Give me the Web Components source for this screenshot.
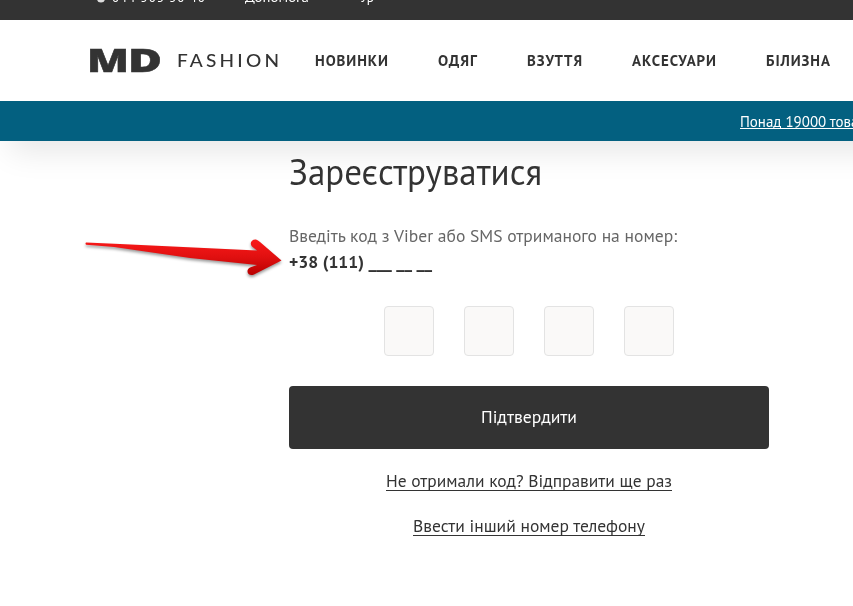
<!DOCTYPE html>
<html lang="uk"><head><meta charset="utf-8"><title>MD Fashion</title>
<style>html,body{margin:0;background:#fff;overflow:hidden}body{font-family:"PT Sans","Noto Sans",sans-serif;color:#333}</style></head>
<body><md-page></md-page>
<script>
// A single line of text condensed to a given width.
class FitText extends HTMLElement{
 connectedCallback(){
  const a=n=>this.getAttribute(n);
  this.attachShadow({mode:'open'}).innerHTML=`<style>:host{display:block;flex:none;width:${a('w')}px;white-space:nowrap}
  span{display:inline-block;transform-origin:0 50%;font-size:${a('size')}px;line-height:${a('lh')||24}px;font-weight:${a('weight')||400};letter-spacing:${a('ls')||0}px}</style><span><slot></slot></span>`;
  const s=this.shadowRoot.querySelector('span');
  s.style.transform=`scaleX(${+a('w')/(s.getBoundingClientRect().width-(+a('ls')||0))})`;
 }}
customElements.define('fit-text',FitText);
class MdTopbar extends HTMLElement{constructor(){super();this.attachShadow({mode:'open'}).innerHTML=`<style>
:host{display:flex;height:20px;background:#333;color:#fff;overflow:hidden;box-sizing:border-box;padding-left:97px;align-items:flex-start}
fit-text{margin-top:-15px}svg{margin:-6px 7px 0 0;flex:none}.h{margin-left:40px}.c{margin-left:51px}</style>
<svg width="8" height="9"><circle cx="4" cy="4.5" r="4" fill="#ddd"/></svg>
<fit-text w="93" size="14" ls="1">044 503 50 40</fit-text><fit-text class="h" w="64" size="14">Допомога</fit-text><fit-text class="c" w="14" size="14">Ур</fit-text>`}}
customElements.define('md-topbar',MdTopbar);
class MdLogo extends HTMLElement{constructor(){super();this.attachShadow({mode:'open'}).innerHTML=`<style>
:host{display:flex;align-items:center;width:190px;height:81px;flex:none}.m{font-family:"Open Sans",sans-serif;margin:-2px 0 0 -2px;-webkit-text-stroke:.5px #333}.d{margin-left:-1px}.f{font-family:Lato,sans-serif;margin:-2px 0 0 15px}</style>
<fit-text class="m" w="42" size="32" weight="800" lh="40">M</fit-text><fit-text class="m d" w="34" size="32" weight="800" lh="40">D</fit-text><fit-text class="f" w="102" size="18" ls="3" weight="500">FASHION</fit-text>`}}
customElements.define('md-logo',MdLogo);
class MdHeader extends HTMLElement{constructor(){super();this.attachShadow({mode:'open'}).innerHTML=`<style>
:host{display:flex;height:81px;align-items:center;padding-left:89px;background:#fff}nav{display:flex;gap:50px;margin:-2px 0 0 36px}</style>
<md-logo></md-logo><nav>${[['НОВИНКИ',73],['ОДЯГ',39],['ВЗУТТЯ',55],['АКСЕСУАРИ',84],['БІЛИЗНА',64]].map(([t,w])=>`<fit-text w="${w}" size="16" weight="700" ls="1">${t}</fit-text>`).join('')}</nav>`}}
customElements.define('md-header',MdHeader);
class MdBanner extends HTMLElement{constructor(){super();this.attachShadow({mode:'open'}).innerHTML=`<style>
:host{display:flex;box-sizing:border-box;height:40px;background:#036080;color:#fff;overflow:hidden;padding:8px 0 0 740px}
.u{border-bottom:1px solid #fff;height:19px;width:max-content}</style><div class="u"><fit-text w="138" size="16">Понад 19000 товарів</fit-text></div>`}}
customElements.define('md-banner',MdBanner);
class MdCode extends HTMLElement{constructor(){super();this.attachShadow({mode:'open'}).innerHTML=`<style>
:host{display:flex;gap:30px;justify-content:center}input{box-sizing:border-box;width:50px;height:50px;margin:0;border:1px solid #e3e3e3;border-radius:4px;background:#faf9f8;text-align:center}</style>${'<input maxlength="1">'.repeat(4)}`}}
customElements.define('md-code',MdCode);
class MdLink extends HTMLElement{constructor(){super();this.attachShadow({mode:'open'}).innerHTML=`<style>
:host{display:block;width:max-content;height:21px;margin:0 auto;border-bottom:1px solid #333}</style><slot></slot>`}}
customElements.define('md-link',MdLink);
class MdArrow extends HTMLElement{constructor(){super();this.attachShadow({mode:'open'}).innerHTML=`<style>
:host{position:absolute;left:80px;top:230px;pointer-events:none}svg{display:block;filter:drop-shadow(0 2px 1.5px #0006)}</style>
<svg width="210" height="55"><defs><linearGradient id="r" x2="0" y2="1"><stop stop-color="#fa1919"/><stop offset=".5" stop-color="#e01010"/><stop offset="1" stop-color="#b90000"/></linearGradient></defs>
<path fill="url(#r)" d="M6 12.500 L40 14 L177 20.500 L172 16.500 C169 13 172 9 176 9.500 Q178 10 180 12 L201.500 30.500 L174 44.500 C168 47 165 40 170 37.500 L177 35 L110 28 L34 17 L6 14.800 Q5 13.500 6 12.500Z"/></svg>`}}
customElements.define('md-arrow',MdArrow);
class MdPage extends HTMLElement{constructor(){super();this.attachShadow({mode:'open'}).innerHTML=`<style>
:host{display:block;position:relative;width:853px;height:606px;overflow:hidden;background:#fff}
.head{width:920px;box-shadow:0 20px 30px -10px rgba(0,0,0,.1)}
main{width:480px;margin-left:289px;padding-top:9px;position:relative}
.p{color:#666;margin-top:30px}.n{margin-top:2px}md-code{margin-top:32px}
button{display:flex;width:480px;height:63px;margin:30px 0 0;padding:0 0 2px;border:0;border-radius:4px;background:#333;color:#fff;font-family:inherit;align-items:center;justify-content:center}
.l1{margin-top:20px}.l2{margin-top:23px}</style>
<div class="head"><md-topbar></md-topbar><md-header></md-header><md-banner></md-banner></div>
<main><fit-text w="253" size="36" lh="44">Зареєструватися</fit-text>
<fit-text class="p" w="388" size="18">Введіть код з Viber або SMS отриманого на номер:</fit-text>
<fit-text class="n" w="143" size="18" weight="700">+38 (111) ___ __ __</fit-text>
<md-code></md-code><button><fit-text w="96" size="18">Підтвердити</fit-text></button>
<md-link class="l1"><fit-text w="286" size="18">Не отримали код? Відправити ще раз</fit-text></md-link>
<md-link class="l2"><fit-text w="232" size="18">Ввести інший номер телефону</fit-text></md-link></main><md-arrow></md-arrow>`}}
customElements.define('md-page',MdPage);
</script></body></html>
